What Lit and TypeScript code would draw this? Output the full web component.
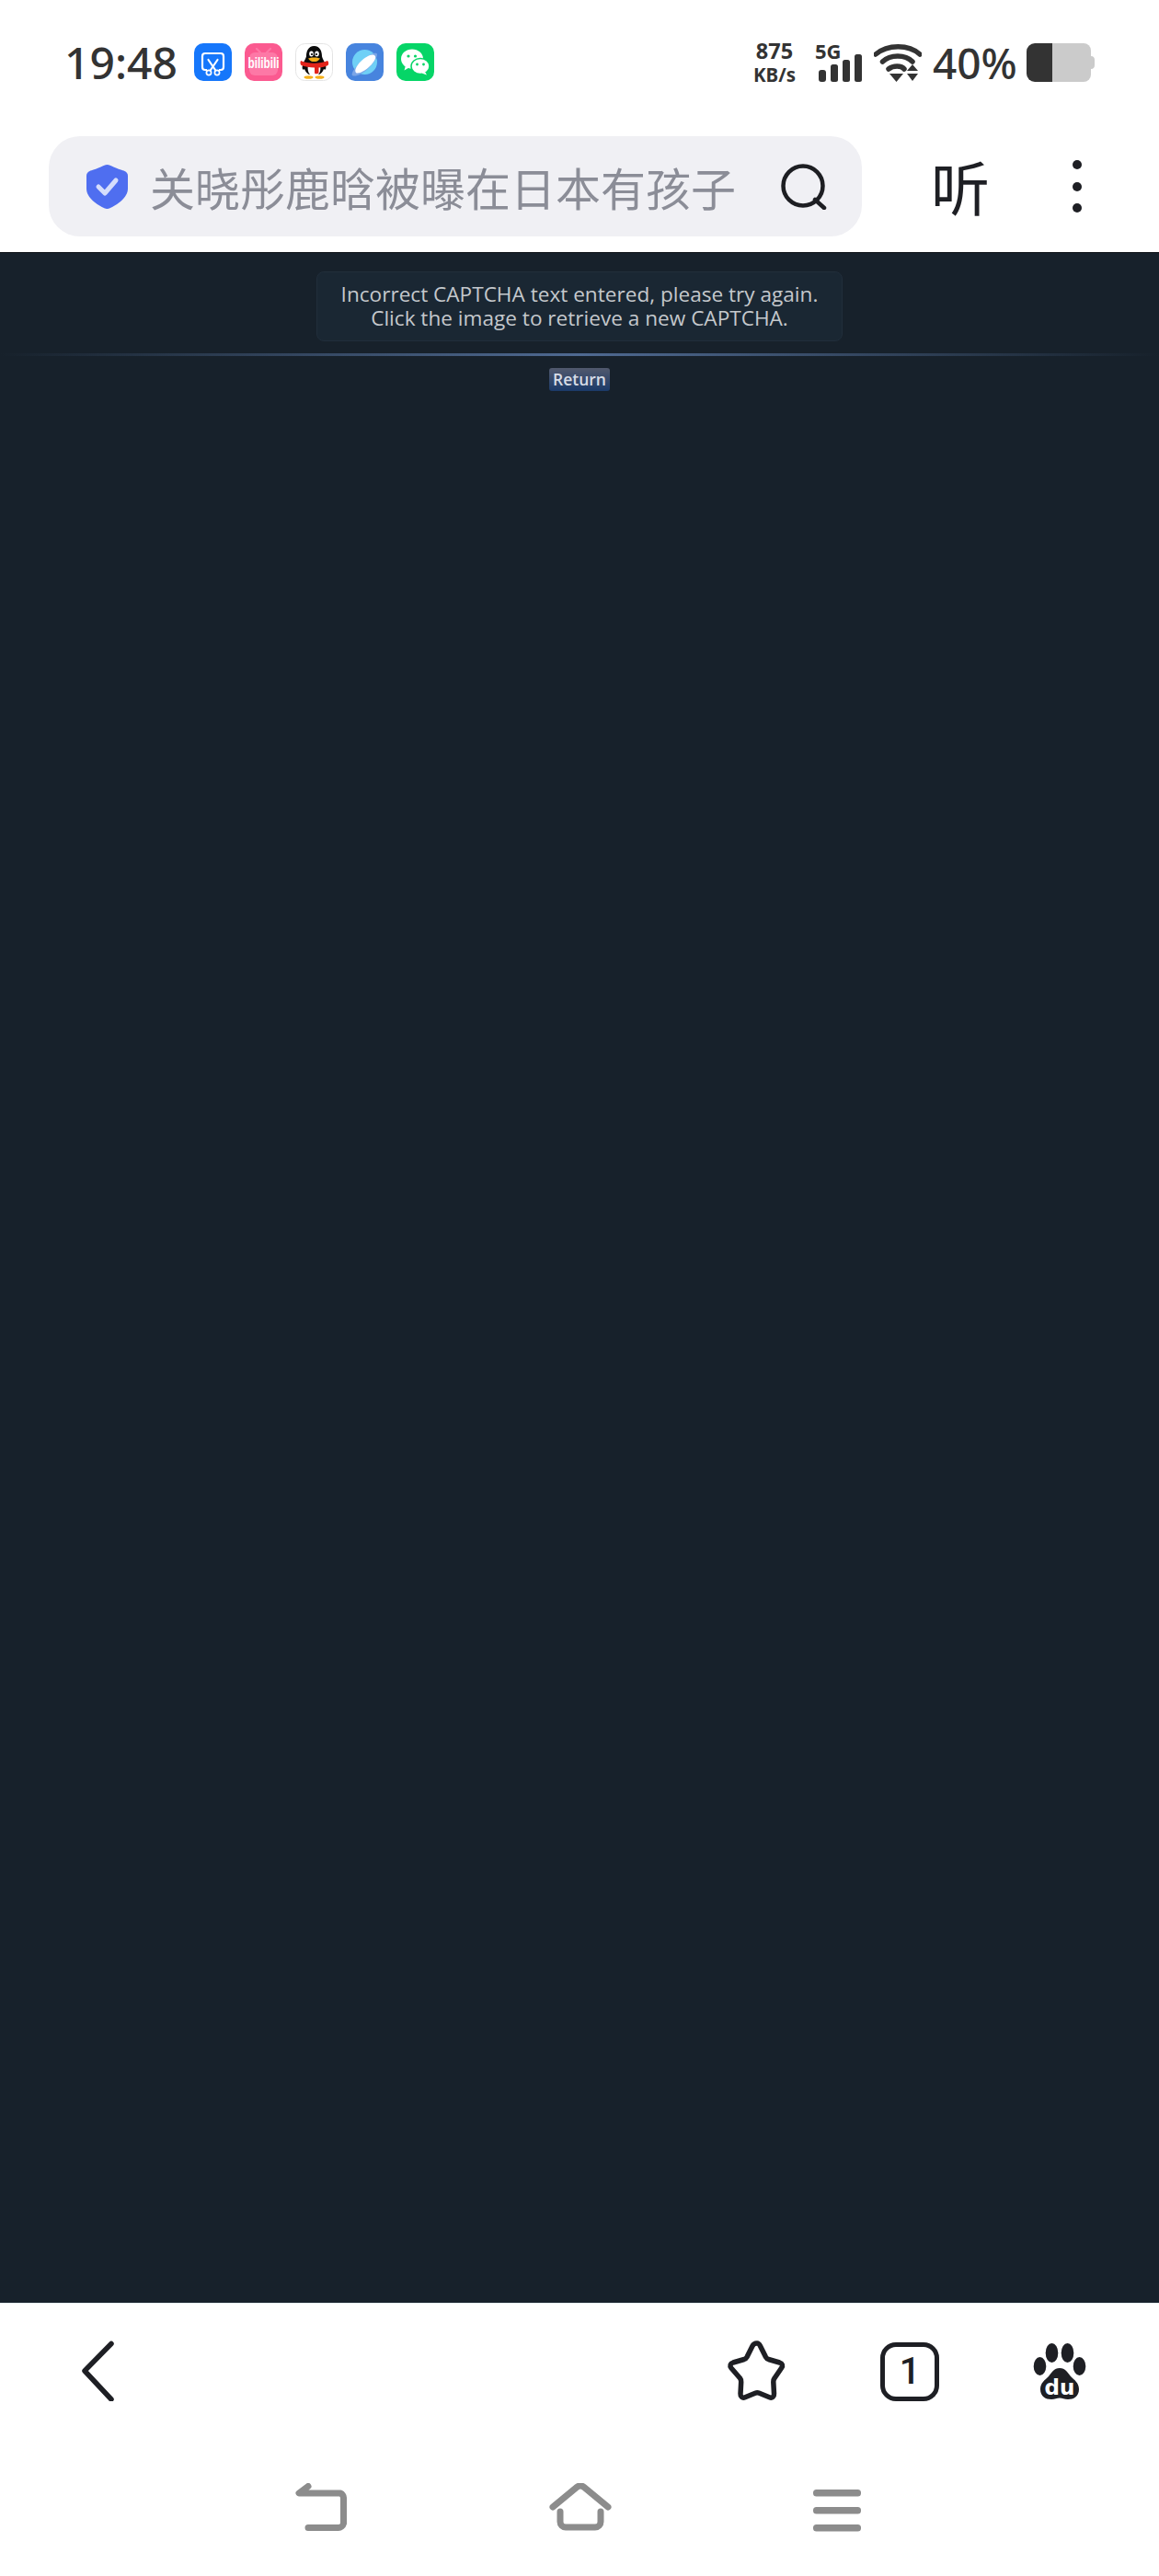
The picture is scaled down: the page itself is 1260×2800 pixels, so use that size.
import { LitElement, html, css, svg } from "lit";
import { customElement } from "lit/decorators.js";

const appShot = svg`<rect width="41" height="41" rx="10" fill="#1677fb"/>
<path d="M14 29H12a3 3 0 0 1-3-3V14a3 3 0 0 1 3-3h17a3 3 0 0 1 3 3v12a3 3 0 0 1-3 3h-2" fill="none" stroke="#fff" stroke-width="2.2"/>
<path d="M15.5 18l7.5 11M25.5 18l-7.5 11" stroke="#fff" stroke-width="2.2" stroke-linecap="round"/>
<circle cx="16" cy="32" r="2.6" fill="#1677fb" stroke="#fff" stroke-width="1.7"/><circle cx="25" cy="32" r="2.6" fill="#1677fb" stroke="#fff" stroke-width="1.7"/>`;

const appBili = svg`<rect width="41" height="41" rx="10" fill="#fb5a90"/>
<rect x="5" y="10" width="31" height="25" rx="6" fill="#fd78a6"/>
<path d="M13 6l4 4M28 6l-4 4" stroke="#fd78a6" stroke-width="2.2" stroke-linecap="round"/>
<text transform="translate(20.5 27) scale(.74 1)" text-anchor="middle" font-family="'Liberation Sans',sans-serif" font-size="16" font-weight="700" fill="#fff">bilibili</text>`;

const appQQ = svg`<rect x=".5" y=".5" width="40" height="40" rx="10" fill="#fff" stroke="#e4e4e4"/>
<path d="M20.5 3C14 3 12 9 12 14c0 2-3 6-4 10-1 3 0 6 2 4 1 3 3 5 5 6h11c2-1 4-3 5-6 2 2 3-1 2-4-1-4-4-8-4-10 0-5-2-11-8.500-11z" fill="#0b0b0b"/>
<path d="M14 24c2-2 11-2 13 0 1 4 0 9-3 11h-7c-3-2-4-7-3-11z" fill="#fff"/>
<ellipse cx="17.500" cy="11.500" rx="2.300" ry="3" fill="#fff"/><ellipse cx="23.500" cy="11.500" rx="2.300" ry="3" fill="#fff"/>
<circle cx="18" cy="12" r="1.100" fill="#000"/><circle cx="23" cy="12" r="1.100" fill="#000"/>
<path d="M14 16.500c3-1.500 10-1.500 13 0-2 3-4 3.500-6.500 3.500s-4.500-.5-6.500-3.500z" fill="#f5b01a"/>
<path d="M6 19c8 3.500 21 3.500 29 0 1.500 1 1.500 4 .5 5-3 1.500-6 2.300-10 2.500v6c-1.500 1-4 1-4.500 0v-6c-5 0-11-1-14.500-2.500-1-1-1.500-3-.5-5z" fill="#e2231a"/>
<ellipse cx="14.500" cy="37" rx="5" ry="1.800" fill="#f5b01a"/><ellipse cx="26.500" cy="37" rx="5" ry="1.800" fill="#f5b01a"/>`;

const appBrowser = svg`<rect width="41" height="41" rx="10" fill="#4784de"/>
<circle cx="20.500" cy="20.500" r="13.500" fill="#6fd0f6"/>
<path d="M7 35c-1-1 0-4 3-8 5-7 14-14 20-16 2-.5 4-.5 4 1 .5 3-4 10-10 16-7 6-14 9-17 7z" fill="#7fa9e8" opacity=".9"/>
<path d="M11 32c-2-2 0-7 5-12s12-9 15-7 0 7-5 12-13 9-15 7z" fill="#fff"/>`;

const appWechat = svg`<rect width="41" height="41" rx="10" fill="#06d567"/>
<ellipse cx="17" cy="17" rx="12" ry="10.500" fill="#fff"/><path d="M10 24l-1.500 5.500 6-3.500z" fill="#fff"/>
<ellipse cx="26" cy="25" rx="10" ry="8.500" stroke="#06d567" stroke-width="1.500" fill="#fff"/><path d="M31 31l2 3.500-5.500-2z" fill="#fff"/>
<circle cx="13" cy="14" r="1.600" fill="#06d567"/><circle cx="20.500" cy="14" r="1.600" fill="#06d567"/>
<circle cx="22.500" cy="23" r="1.400" fill="#06d567"/><circle cx="29.500" cy="23" r="1.400" fill="#06d567"/>`;

@customElement("app-root")
export class AppRoot extends LitElement {
  static styles = css`
    :host {
      display: flex;
      flex-direction: column;
      width: 1260px;
      height: 2800px;
      background: #fff;
      font-family: "Noto Sans", "Noto Sans CJK SC", sans-serif;
      overflow: hidden;
    }
    svg { display: block; flex: none; }
    .status {
      height: 148px;
      box-sizing: border-box;
      padding: 47px 0 0 70px;
      display: flex;
      align-items: flex-start;
      color: #333;
    }
    .time {
      width: 141px;
      font: 500 48px/42px "Noto Sans", sans-serif;
      height: 42px;
    }
    .apps { display: flex; gap: 14px; }
    .spacer { flex: 1; }
    .speed {
      width: 54px;
      display: flex;
      flex-direction: column;
      align-items: center;
      font: 700 23.500px/25px "Noto Sans", sans-serif;
      margin-top: -4px;
    }
    .speed span:last-child { font-size: 20.500px; line-height: 20px; margin-top: 3px; }
    .net { width: 50px; height: 42px; margin-left: 19px; position: relative; }
    .net b { font: 700 22px/18px "Noto Sans", sans-serif; display: block; margin-top: -1px; margin-left: -2px; }
    .net svg { position: absolute; left: 0; bottom: 0; }
    .wifi { margin-left: 12px; }
    .pct {
      margin-left: 12px;
      width: 102px;
      font: 500 46px/42px "Noto Sans", sans-serif;
    }
    .batt { margin-right: 70px; }

    .toolbar {
      height: 126px;
      box-sizing: border-box;
      padding-left: 53px;
      display: flex;
      align-items: flex-start;
    }
    .search {
      width: 884px;
      height: 109px;
      box-sizing: border-box;
      background: #f0f0f4;
      border-radius: 34px;
      padding: 0 38px 0 41px;
      display: flex;
      align-items: center;
    }
    .query {
      flex: 1;
      margin-left: 24px;
      font: 400 49px/60px "Noto Sans CJK SC", sans-serif;
      color: #8b8d97;
      white-space: nowrap;
    }
    .listen {
      width: 64px;
      margin-left: 75px;
      margin-top: 18px;
      font: 400 64px/70px "Noto Sans CJK SC", sans-serif;
      color: #1e1f24;
    }
    .more { margin-left: 89px; margin-top: 25px; }

    .main {
      flex: 1;
      background: #17212b;
      border-top: 1px solid #0d1117;
      display: flex;
      flex-direction: column;
      align-items: center;
      padding-top: 20px;
    }
    .msg {
      width: 572px;
      height: 76px;
      box-sizing: border-box;
      background: #1a2733;
      border: 1px solid #212e3b;
      border-radius: 8px;
      display: flex;
      flex-direction: column;
      justify-content: center;
      text-align: center;
      color: #c4c8cc;
      font: 400 22.600px/26px "Open Sans", sans-serif;
      white-space: nowrap;
    }
    .rule {
      width: 1260px;
      height: 3px;
      margin-top: 13px;
      background: linear-gradient(90deg, #17212b 0%, #4f6a92 50%, #17212b 100%);
    }
    .ret {
      margin-top: 13px;
      width: 66px;
      height: 25px;
      box-sizing: border-box;
      border-radius: 3px;
      background: linear-gradient(#51596d, #1b3a69);
      color: #d6dce6;
      font: 600 17.500px/25px "Open Sans", sans-serif;
      text-align: center;
    }

    .bottom {
      height: 297px;
      box-sizing: border-box;
      background: #fff;
      border-top: 1px solid #e6edf0;
      display: flex;
      flex-direction: column;
    }
    .tools {
      display: flex;
      align-items: flex-start;
      height: 195px;
      box-sizing: border-box;
      padding: 40px 0 0 88px;
    }
    .tools .star { margin-left: 666px; }
    .tools .paw { margin-left: 102px; margin-top: 3px; }
    .tabcount {
      width: 64px;
      height: 64px;
      box-sizing: border-box;
      border: 5px solid #1e1f24;
      border-radius: 17px;
      color: #1e1f24;
      margin-left: 101px;
      margin-top: 2px;
      text-align: center;
      font: 500 40px/53px "Roboto", sans-serif;
    }
    .nav { display: flex; align-items: flex-start; padding-left: 320px; }
    .nav .home { margin-left: 217px; }
    .nav .menu { margin-left: 219px; margin-top: 7px; }
  `;

  render() {
    return html`
      <div class="status">
        <div class="time">19:48</div>
        <div class="apps">
          <svg width="41" height="41" viewBox="0 0 41 41">${appShot}</svg>
          <svg width="41" height="41" viewBox="0 0 41 41">${appBili}</svg>
          <svg width="41" height="41" viewBox="0 0 41 41">${appQQ}</svg>
          <svg width="41" height="41" viewBox="0 0 41 41">${appBrowser}</svg>
          <svg width="41" height="41" viewBox="0 0 41 41">${appWechat}</svg>
        </div>
        <div class="spacer"></div>
        <div class="speed"><span>875</span><span>KB/s</span></div>
        <div class="net">
          <b>5G</b>
          <svg width="50" height="30" viewBox="0 0 50 30" fill="#333">
            <rect x="2" y="17" width="8" height="13" rx="3"/>
            <rect x="15" y="11" width="8" height="19" rx="2.500"/>
            <rect x="28" y="6" width="8" height="24" rx="2.500"/>
            <rect x="41" y="0" width="8" height="30" rx="2.500"/>
          </svg>
        </div>
        <svg class="wifi" width="52" height="42" viewBox="0 0 52 42" fill="none">
          <path d="M2 12C15 1 38 1 50 12" stroke="#333" stroke-width="5.500" stroke-linecap="round"/>
          <path d="M9.500 20C18 12 34 12 42 20" stroke="#333" stroke-width="5.500" stroke-linecap="round"/>
          <path d="M16 28c5-4 14-4 17 0" stroke="#333" stroke-width="5.500" stroke-linecap="round"/>
          <path d="M17 33h15l-7.500 9z" fill="#333"/>
          <path d="M36 30l6-7 6 7zM36 33h12l-6 8z" fill="#333"/>
        </svg>
        <div class="pct">40%</div>
        <svg class="batt" width="74" height="42" viewBox="0 0 74 42">
          <path d="M28 0h34a8 8 0 0 1 8 8v26a8 8 0 0 1-8 8H28z" fill="#cbcbcb"/>
          <path d="M70 14c3 0 4 2 4 4v6c0 2-1 4-4 4z" fill="#cbcbcb"/>
          <path d="M28 0H9a9 9 0 0 0-9 9v24a9 9 0 0 0 9 9h19z" fill="#333"/>
        </svg>
      </div>

      <div class="toolbar">
        <div class="search">
          <svg width="45" height="48" viewBox="0 0 45 48">
            <path d="M22.500 0c2 0 4 1 7 2.500 5 2.500 10 3.500 12 4.500 2 1 3.500 2.500 3.500 5v14c0 10-12 18-20 21.500-2 .7-3 .7-5 0C12 44 0 36 0 26V12c0-2.500 1.500-4 3.500-5 2-1 7-2 12-4.500C18.500 1 20.500 0 22.500 0z" fill="#4f6ef0"/>
            <path d="M13 24l7 7 12-14" fill="none" stroke="#d5ddfc" stroke-width="5" stroke-linecap="round" stroke-linejoin="round"/>
          </svg>
          <div class="query">关晓彤鹿晗被曝在日本有孩子</div>
          <svg width="50" height="50" viewBox="0 0 50 50" fill="none" stroke="#1d1e22" stroke-width="4.500" stroke-linecap="round">
            <circle cx="24" cy="24" r="21.500"/>
            <path d="M37 39l10 9"/>
          </svg>
        </div>
        <div class="listen">听</div>
        <svg class="more" width="12" height="60" viewBox="0 0 12 60" fill="#1e1f24">
          <circle cx="6" cy="6" r="5"/><circle cx="6" cy="30" r="5"/><circle cx="6" cy="53" r="5"/>
        </svg>
      </div>

      <div class="main">
        <div class="msg">
          <div>Incorrect CAPTCHA text entered, please try again.</div>
          <div>Click the image to retrieve a new CAPTCHA.</div>
        </div>
        <div class="rule"></div>
        <div class="ret">Return</div>
      </div>

      <div class="bottom">
        <div class="tools">
          <svg width="36" height="66" viewBox="0 0 36 66" fill="none" stroke="#1e1f24" stroke-width="5.500" stroke-linecap="round" stroke-linejoin="round">
            <path d="M33 3.500L4 33l29 31" />
          </svg>
          <svg class="star" width="66" height="66" viewBox="0 0 66 66" fill="none" stroke="#1e1f24" stroke-width="5.500" stroke-linejoin="round">
            <path d="M33 3c1.500 0 2.500 1 3.500 3l6 12c.7 1.300 1.500 2 3 2.500l12 3.500c3 1 4 3.500 2 6l-7.500 11c-1 1.300-1.300 2.300-1.200 4l.7 13c.2 3-2 5-5 3.800l-11-4.500c-1.500-.6-3-.6-4.500 0l-11 4.500c-3 1.200-5.200-.8-5-3.800l.7-13c.1-1.700-.2-2.700-1.200-4L5 30c-2-2.500-1-5 2-6l12-3.500c1.500-.5 2.300-1.200 3-2.500l6-12c1-2 2-3 5-3z"/>
          </svg>
          <div class="tabcount">1</div>
          <svg class="paw" width="58" height="62" viewBox="0 0 58 62">
            <g fill="#1e1f24">
              <ellipse cx="7.500" cy="25" rx="6.800" ry="10"/>
              <ellipse cx="20.500" cy="10.500" rx="6.800" ry="10.500"/>
              <ellipse cx="37.500" cy="10.500" rx="6.800" ry="10.500"/>
              <ellipse cx="50.500" cy="25" rx="6.800" ry="10"/>
              <path d="M29 27c6 0 9 5 12 9 4 4 9 7 9 14 0 8-6 11-12 11-4 0-6-1.500-9-1.500s-5 1.500-9 1.500C14 61 8 58 8 50c0-7 5-10 9-14 3-4 6-9 12-9z"/>
            </g>
            <text x="29" y="56" text-anchor="middle" font-family="'DejaVu Sans',sans-serif" font-size="23" font-weight="700" fill="#fff">du</text>
          </svg>
        </div>
        <div class="nav">
          <svg width="60" height="52" viewBox="0 0 60 52" fill="none" stroke="#8c8c8c" stroke-width="7" stroke-linecap="round" stroke-linejoin="round">
            <path d="M15 3.500L5 11h45a6 6 0 0 1 3.500 5v28a6 6 0 0 1-6 4.500H15"/>
          </svg>
          <svg class="home" width="68" height="52" viewBox="0 0 68 52" fill="none" stroke="#8c8c8c" stroke-width="7" stroke-linecap="round" stroke-linejoin="round">
            <path d="M4 26L30 4.500c2.500-2 5.500-2 8 0L64 26"/>
            <path d="M12 31v11a6 6 0 0 0 6 6h32a6 6 0 0 0 6-6V31"/>
          </svg>
          <svg class="menu" width="52" height="46" viewBox="0 0 52 46" fill="#8c8c8c">
            <rect y="0" width="52" height="7.500" rx="3.500"/>
            <rect y="19" width="52" height="7.500" rx="3.500"/>
            <rect y="38" width="52" height="7.500" rx="3.500"/>
          </svg>
        </div>
      </div>
    `;
  }
}
